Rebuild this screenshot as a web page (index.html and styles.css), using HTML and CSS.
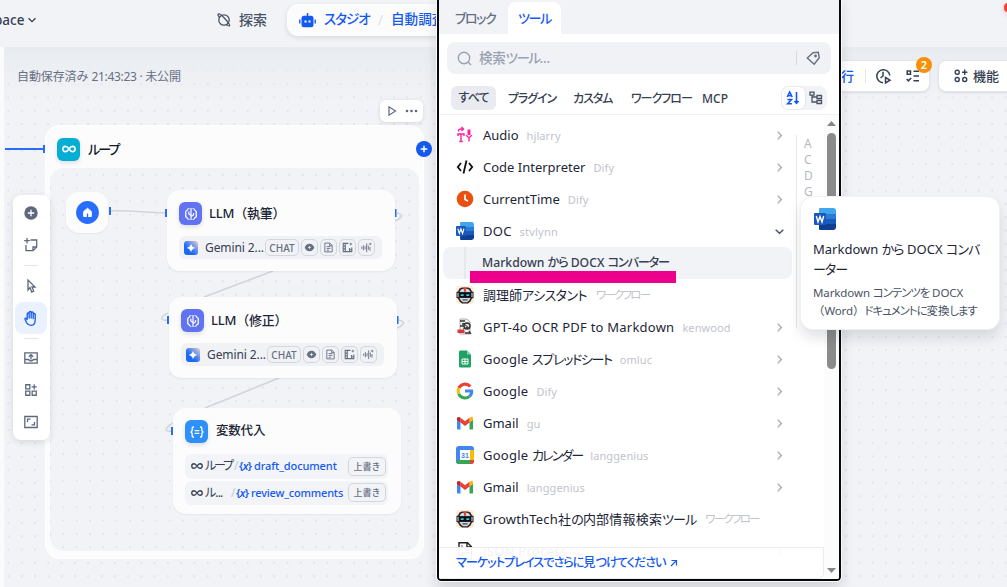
FILE: index.html
```html
<!DOCTYPE html>
<html lang="ja">
<head>
<meta charset="utf-8">
<title>ワークフロー</title>
<link rel="stylesheet" href="styles.css">
</head>
<body>
<svg class="defs" width="0" height="0">
  <defs>
    <linearGradient id="gem" x1="0" y1="1" x2="1" y2="0"><stop offset="0.35" stop-color="#1c69f5"/><stop offset="0.65" stop-color="#6d94ee"/><stop offset="1" stop-color="#f6cfc0"/></linearGradient>
    <symbol id="chev" viewBox="0 0 12 12"><path d="M4 1.800 8 6 4 10.200" fill="none" stroke="currentColor" stroke-width="1.500"/></symbol>
    <symbol id="down" viewBox="0 0 12 12"><path d="M1.800 4 6 8 10.200 4" fill="none" stroke="currentColor" stroke-width="1.600"/></symbol>
    <symbol id="inf" viewBox="0 0 24 24"><path d="M12 12c-2-3-3.500-4.500-6-4.500a4.500 4.500 0 0 0 0 9c2.500 0 4-1.500 6-4.500s3.500-4.500 6-4.500a4.500 4.500 0 0 1 0 9c-2.500 0-4-1.500-6-4.500z" fill="none" stroke="currentColor" stroke-width="2.600"/></symbol>
    <symbol id="llm" viewBox="0 0 14 14"><g fill="none" stroke="#fff" stroke-width="1.200"><path d="M7 1v12M5.500 1.500C3.800 1.500 3.400 2.400 3.200 3.200 1.800 3.700 1.300 5.300 1.900 7c-.6 1.700-.1 3.300 1.300 3.800.2.800.6 1.700 2.300 1.700M8.500 1.500c1.700 0 2.100.9 2.300 1.700 1.400.5 1.900 2.100 1.300 3.800.6 1.700.1 3.300-1.300 3.800-.2.800-.6 1.700-2.300 1.700M7 8.500 4.800 7V4.500M7 9.500 9.500 8V6"/></g></symbol>
    <symbol id="gemini" viewBox="0 0 14 14"><rect width="14" height="14" rx="3" fill="url(#gem)"/><path d="M7 2.600Q7.700 6.300 11.400 7 7.700 7.700 7 11.400 6.300 7.700 2.600 7 6.300 6.300 7 2.600z" fill="#fff"/></symbol>
    <symbol id="eye" viewBox="0 0 12 12"><path d="M6 1.800C3.200 1.800 1.300 4 .8 6c.5 2 2.400 4.200 5.200 4.200s4.700-2.200 5.200-4.200c-.5-2-2.400-4.200-5.200-4.200zM6 3.800l.6 1.600 1.600.6-1.600.6L6 8.200l-.6-1.600L3.800 6l1.600-.6z" fill="currentColor" fill-rule="evenodd"/></symbol>
    <symbol id="file" viewBox="0 0 12 12"><path d="M2 1.200h5.500L10 3.700v7.100H2zM4 5h4M4 7h4M4 9h2.500M7.200 1.500V4H10" fill="none" stroke="currentColor" stroke-width="1"/></symbol>
    <symbol id="film" viewBox="0 0 12 12"><path d="M7 1.500H1.300v9h9.400V6M3.600 1.500v9M8.300 6.500v4M1.300 4.500h2.300M1.300 7.500h2.300M8.300 8.500h2.400" fill="none" stroke="currentColor" stroke-width="1.200"/><path d="M9.700.2l.5 1.500 1.500.5-1.500.5-.5 1.500-.5-1.500-1.500-.5 1.500-.5z" fill="currentColor"/></symbol>
    <symbol id="wave" viewBox="0 0 12 12"><path d="M.8 5v2.500M2.600 3.500v5.500M4.400 4.500v3.500M6.200 1.500v9.500M8 4v4.500M9.800 5.500v4" fill="none" stroke="currentColor"/><path d="M10 .3l.5 1.400 1.400.5-1.400.5-.5 1.400-.5-1.400-1.400-.5 1.400-.5z" fill="currentColor"/></symbol>
    <symbol id="robot" viewBox="0 0 18 18"><rect width="18" height="18" rx="4" fill="#ffead5"/><path d="M.5 6 2 5.500 3.500 2.500 6 1.500h6l2.500 1L16 5.500l1.500.5v6l-1.500.5-1.500 3L12 17.500H6L3.500 15.500l-1.500-3L.5 12z" fill="#26282d"/><path d="M3.500 6 5 3.500 7 2.800h4l2 .7L14.500 6zM3.500 12h11l-1.300 2.500L11 16.300H7L4.800 14.500zM1.500 7h1v4h-1zM15.500 7h1v4h-1z" fill="#d4d6da"/><path d="M3.200 6.700h11.600v4.600H3.200z" fill="#0c0e14"/><path d="M4.700 8.200h3v1.800h-3zM10.300 8.200h3v1.800h-3z" fill="#30c8ee"/><path d="M8 1.500h2v4.300H8z" fill="#e84332"/><path d="M6.500 13.300h5v1.200h-5z" fill="#444"/></symbol>
    <symbol id="gmail" viewBox="0 0 18 14"><path d="M1 3v9.500c0 .6.400 1 1 1h2.500V6z" fill="#4285f4"/><path d="M17 3v9.500c0 .6-.4 1-1 1h-2.500V6z" fill="#34a853"/><path d="M13.500 2v4.500L17 4V2.500C17 .8 15 0 13.500 2z" fill="#fbbc04"/><path d="M4.500 6.500V1.800L9 5.200l4.500-3.400v4.700L9 10z" fill="#ea4335"/><path d="M1 2.500V4l3.500 2.500V1.800C3 .3 1 1 1 2.500z" fill="#c5221f"/></symbol>
    <symbol id="word" viewBox="0 0 22 22"><path d="M6 0h13a3 3 0 0 1 3 3v3H5V1a1 1 0 0 1 1-1z" fill="#41a5ee"/><path d="M5 6h17v5H5z" fill="#2b7cd3"/><path d="M5 11h17v5H5z" fill="#185abd"/><path d="M5 16h17v3a3 3 0 0 1-3 3H6a1 1 0 0 1-1-1z" fill="#103f91"/><rect y="5" width="12" height="12" rx="1" fill="#1959bb"/><path d="M2.300 8 4 14l2-5.500L8 14l1.700-6" fill="none" stroke="#fff" stroke-width="1.400"/></symbol>
    <symbol id="doc" viewBox="0 0 18 18"><path d="M3 .7h8.500l4 4V17H3zM11 1v4h4" fill="#fff" stroke="#222" stroke-width="1.400"/><path d="M5.500 4h1M5.500 8h1.500M9 8h4M5.500 11h7" stroke="#333" stroke-width="1.500"/></symbol>
    <symbol id="feat" viewBox="0 0 24 24"><path d="M3 3h7v7H3zM3 14h7v7H3zM14 14h7v7h-7zM17.500 2v9M13 6.500h9" fill="none" stroke="currentColor" stroke-width="2.200"/></symbol>
  </defs>
</svg>

<header class="top">
  <div class="space">pace <svg class="i10"><use href="#down"/></svg></div>
  <div class="explore">
    <svg width="14" height="14" viewBox="0 0 14 14" fill="none" stroke="#495464" stroke-width="1.300"><circle cx="7" cy="7" r="5.200"/><path d="M2.500 4.500C1 2.500.6 1.300 1.200 1 2.500.5 5.500 3 8.200 6s5 6 4.400 6.800c-.6.600-2.400-.5-3.800-1.500"/></svg>
    <span>探索</span>
  </div>
  <div class="studio">
    <svg width="17" height="15" viewBox="0 0 17 15"><path d="M8.500 0v3" stroke="#155aef" stroke-width="1.500"/><rect x="2.500" y="2.700" width="12" height="11.500" rx="2.500" fill="#155aef"/><path d="M.8 6.500v4M16.200 6.500v4" stroke="#155aef" stroke-width="1.400"/><path d="M5.500 7.500h2v2h-2zM9.500 7.500h2v2h-2z" fill="#fff"/></svg>
    <span class="k studio-t">スタジオ</span><i>/</i><span class="studio-n">自動調査</span>
  </div>
  <div class="avatar"></div>
</header>

<main class="canvas">
  <div class="saved">自動保存済み <b>21:43:23 · </b>未公開</div>
  <div class="runbar"><span>行</span><i></i>
    <svg width="17" height="17" viewBox="0 0 17 17" fill="none" stroke="#354052" stroke-width="1.500"><path d="M14.800 7.500A6.500 6.500 0 1 0 8 14.700M8 3.800V8L5.500 10"/><path d="m10.500 9.500 4.500 2.700-4.500 2.800z"/></svg>
    <svg width="14" height="14" viewBox="0 0 14 14" fill="none" stroke="#354052" stroke-width="1.500"><path d="M1.200 2h3.300v3.300H1.200zM.7 10l1.600 1.800L5.200 9M7.500 2.200H13M7.500 7H13M7.500 11.800H13"/></svg>
    <em>2</em>
  </div>
  <div class="featbar"><svg width="14" height="14" viewBox="0 0 14 14" fill="none" stroke="#354052" stroke-width="1.400"><rect x="1.200" y="1.200" width="4" height="4" rx="1.800"/><rect x="1.200" y="8.500" width="4" height="4" rx="1.800"/><rect x="8.700" y="8.500" width="4" height="4" rx="1.800"/><path d="M10.700.5v5.400M8 3.200h5.400"/></svg><span>機能</span></div>

  <div class="loop"><div class="loop-head"><div class="ico cyan"><svg width="14" height="14"><use href="#inf"/></svg></div><span class="k">ループ</span></div><div class="loop-in"></div></div>
  <div class="node-tools"><svg width="11" height="12" viewBox="0 0 11 12"><path d="M2 1.800v8.400L8.500 6z" fill="none" stroke="#5d687c" stroke-width="1.200"/></svg><svg width="13" height="4" viewBox="0 0 13 4" fill="#5d687c"><circle cx="2" cy="2" r="1.300"/><circle cx="6.500" cy="2" r="1.300"/><circle cx="11" cy="2" r="1.300"/></svg></div>

  <svg class="edges" width="440" height="587" viewBox="0 0 440 587">
    <g fill="none" stroke="#d0d5dc" stroke-width="1.500"><path d="M110 211C130 210 145 213 166 213"/><path d="M396 213q7 1 5 4q-2 3-6 4M273 271 204 297M168 313q-7 3-6 6q2 2 6 1"/><path d="M398 320q7 1 5 4q-2 3-6 4M279 378 205 408M173 423q-7 4-7 7q2 2 6 1"/></g>
    <path d="M5 149h39" stroke="#296dff" stroke-width="2"/>
    <g fill="#296dff"><path d="M43 145h2v8h-2zM109 207h2v8h-2zM165 209h2v8h-2zM394.500 209h2v8h-2zM167 316h2v8h-2zM396.500 316h2v8h-2zM171 427h2v8h-2z"/></g>
  </svg>
  <div class="plus"><svg width="16" height="16" viewBox="0 0 16 16"><circle cx="8" cy="8" r="8" fill="#155aef"/><path d="M8 4.700v6.600M4.700 8h6.600" stroke="#fff" stroke-width="1.500"/></svg></div>

  <div class="node start"><svg width="23" height="23" viewBox="0 0 23 23"><circle cx="11.500" cy="11.500" r="11.400" fill="#296dff"/><path d="M7.700 10.500 11.500 7.300 15.300 10.500v5H7.700z" fill="#fff" stroke="#fff" stroke-linejoin="round"/><path d="M11.500 12.500V16" stroke="#296dff" stroke-width="1.300"/></svg></div>

  <section class="node llm one">
    <div class="head"><div class="ico indigo"><svg width="14" height="14"><use href="#llm"/></svg></div><h3>LLM<span>（執筆）</span></h3></div>
    <div class="model"><svg width="14" height="14"><use href="#gemini"/></svg><span>Gemini 2...</span><b class="chat">CHAT</b><b><svg><use href="#eye"/></svg></b><b><svg><use href="#file"/></svg></b><b><svg><use href="#film"/></svg></b><b><svg><use href="#wave"/></svg></b></div>
  </section>
  <section class="node llm two">
    <div class="head"><div class="ico indigo"><svg width="14" height="14"><use href="#llm"/></svg></div><h3>LLM<span>（修正）</span></h3></div>
    <div class="model"><svg width="14" height="14"><use href="#gemini"/></svg><span>Gemini 2...</span><b class="chat">CHAT</b><b><svg><use href="#eye"/></svg></b><b><svg><use href="#file"/></svg></b><b><svg><use href="#film"/></svg></b><b><svg><use href="#wave"/></svg></b></div>
  </section>
  <section class="node assign">
    <div class="head"><div class="ico blue"><svg width="14" height="14" viewBox="0 0 14 14" fill="none" stroke="#fff" stroke-width="1.300"><path d="M4 2H3.200Q2.200 2 2.200 3v2.500L1 7l1.200 1.500V11q0 1 1 1H4M10 2h.8q1 0 1 1v2.500L13 7l-1.200 1.500V11q0 1-1 1H10M4.700 5.600h4.600M4.700 8.400h4.600"/></svg></div><h3 class="cjk">変数代入</h3></div>
    <div class="var"><svg width="12" height="12"><use href="#inf"/></svg><span class="k">ループ</span><i>/</i><em>{<u>x</u>}</em><strong>draft_document</strong><b>上書き</b></div>
    <div class="var"><svg width="12" height="12"><use href="#inf"/></svg><span class="k short">ル...</span><i class="wide">/</i><em>{<u>x</u>}</em><strong class="rev">review_comments</strong><b>上書き</b></div>
  </section>

  <nav class="tools">
    <a><svg width="14" height="14" viewBox="0 0 14 14"><circle cx="7" cy="7" r="6.700" fill="#5d687c"/><path d="M7 3.800v6.400M3.800 7h6.400" stroke="#fff" stroke-width="1.500"/></svg></a>
    <a><svg width="14" height="14" viewBox="0 0 14 14"><path d="M6.500 2h6.200v7L9 12.700H2V7M9 12.500V9h3.500M3 0v5.500M.2 2.700h5.600"/></svg></a>
    <hr>
    <a><svg width="12" height="14" viewBox="0 0 12 14"><path d="M3 1v10l2-2.500L6.700 13l2-.9L7 8h3z"/></svg></a>
    <a class="on"><svg width="16" height="16" viewBox="0 0 16 16"><path d="M4.200 9.500V4a1 1 0 0 1 2 0v4V2.500a1 1 0 0 1 2 0V8 3a1 1 0 0 1 2 0v5.500-4a1 1 0 0 1 2 0V9.500c0 3.700-1.200 5.800-4 5.800-2.200 0-3.500-.8-4.500-2.500L2 9.300c-.4-.9.700-1.500 1.300-.8l1 1.500"/></svg></a>
    <hr>
    <a><svg width="14" height="14" viewBox="0 0 14 14"><path d="M.8 1.800h12.400v10.400H.8zM1 8.500h3.500q2.500 3 5 0H13M7 8.500V3.700M4.800 5.800 7 3.600l2.200 2.200"/></svg></a>
    <a><svg width="14" height="14"><use href="#feat"/></svg></a>
    <a><svg width="14" height="14" viewBox="0 0 14 14"><path d="M.8 1.500h12.400v11H.8zM3.500 7V4.200h3M10.500 7v2.800h-3"/></svg></a>
  </nav>
</main>

<aside class="panel">
  <div class="tabs"><span class="k">ブロック</span><span class="k act">ツール</span></div>
  <div class="search"><svg width="15" height="15" viewBox="0 0 15 15" fill="none" stroke="#98a2b2" stroke-width="1.400"><circle cx="7" cy="7" r="5.700"/><path d="m11 11 3 3"/></svg><span>検索<span class="k">ツール</span>...</span><i></i><svg width="15" height="15" viewBox="0 0 15 15" fill="none" stroke="#676f83" stroke-width="1.400"><path d="M7 1.700 12.300 1.300l.9 5.500-5 6.500L1.300 7z"/><circle cx="9.500" cy="5" r=".7"/></svg></div>
  <div class="filters"><span class="k sel">すべて</span><span class="k f2">プラグイン</span><span class="k f3">カスタム</span><span class="k f4">ワークフロー</span><span class="mcp">MCP</span>
    <div class="sort"><div><svg width="14" height="14" viewBox="0 0 14 14" fill="none" stroke="#155aef" stroke-width="1.600"><path d="M1.200 6 3.700 1l2.500 5M2.200 4.700h3M1.500 8.500h4L1.700 12.700h4.200M10.500 1v11M8.500 10l2 2.300 2-2.300"/></svg></div><svg width="14" height="14" viewBox="0 0 14 14" fill="none" stroke="#495464" stroke-width="1.300"><path d="M1 1.200h4v3H1zM3 4.500V11h5M3 6h5M8 4.500h4.500v3H8zM8 9.500h4.500v3H8z"/></svg></div>
  </div>
  <div class="body">
    <div class="list">
      <div class="row"><svg class="ic" viewBox="0 0 18 18" fill="none" stroke="#ff1fa0" stroke-width="1.400"><path d="M2.500 5.500Q2.500 3 5 3h2M5.500 1 7.500 3 5.500 5M2 10V8h6v2M5 8v7.500M3.300 15.500h3.400"/><path d="M13 3.500v5.500" stroke-width="3"/><path d="M10.300 9q2.700 5 5.400 0M13 12v3.500"/></svg><p>Audio</p><small>hjlarry</small><svg class="c"><use href="#chev"/></svg></div>
      <div class="row"><svg class="ic" viewBox="0 0 18 18" fill="none" stroke="#111" stroke-width="1.800"><path d="M5 5 1.800 9 5 13M13 5l3.200 4-3.200 4M10.500 2.500l-3 13"/></svg><p class="code">Code Interpreter</p><small>Dify</small><svg class="c"><use href="#chev"/></svg></div>
      <div class="row"><svg class="ic" viewBox="0 0 18 18"><circle cx="9" cy="9" r="8.300" fill="#e9500f"/><path d="M9 4.500V9.500l3 1.500" fill="none" stroke="#fff" stroke-width="1.700"/></svg><p>CurrentTime</p><small>Dify</small><svg class="c"><use href="#chev"/></svg></div>
      <div class="row"><svg class="ic"><use href="#word"/></svg><p class="wd">DOC</p><small class="st">stvlynn</small><svg class="c dk"><use href="#down"/></svg></div>
      <div class="row sub"><p>Markdown <span class="k">から</span> DOCX <span class="k">コンバーター</span></p><div class="mark"></div></div>
      <div class="row"><svg class="ic"><use href="#robot"/></svg><p>調理師<span class="k asst">アシスタント</span></p><small class="k">ワークフロー</small></div>
      <div class="row"><svg class="ic" viewBox="0 0 18 18"><path d="M4 1h7l3 3v12H4z" fill="#f3f3f3" stroke="#999" stroke-width=".8"/><path d="M4 3h5M6 6h3M13 13l2 3M4 8h4M9 15h5" stroke="#333" stroke-width="1.300"/><circle cx="11" cy="8" r="3" fill="#ddd" stroke="#333" stroke-width="1.400"/><path d="M7 5l7 6M7 11l5-2" stroke="#333"/><path d="M1.500 11.500h7v3.500h-7z" fill="#dd3437"/></svg><p class="gpt">GPT-4o OCR PDF to Markdown</p><small>kenwood</small><svg class="c"><use href="#chev"/></svg></div>
      <div class="row"><svg class="ic" viewBox="0 0 18 18"><path d="M4 .5h7l4 4V16q0 1.500-1.500 1.500h-9Q3 17.500 3 16V2Q3 .5 4 .5z" fill="#1fa363"/><path d="M11 .5v4h4z" fill="#8ed1b1"/><path d="M6 9h6v5H6zM6 11.500h6M9 9v5" fill="none" stroke="#fff"/></svg><p class="wd">Google <span class="k sheet">スプレッドシート</span></p><small>omluc</small><svg class="c"><use href="#chev"/></svg></div>
      <div class="row"><svg class="ic" viewBox="0 0 18 18" fill="none" stroke-width="3"><path d="M14.300 4.500A7 7 0 0 0 2.800 6" stroke="#ea4335"/><path d="M2.800 6a7 7 0 0 0 0 6" stroke="#fbbc05"/><path d="M2.800 12a7 7 0 0 0 10.700 2.300" stroke="#34a853"/><path d="M13.500 14.300A6 6 0 0 0 15.700 9H9" stroke="#4285f4"/></svg><p class="wd">Google</p><small>Dify</small><svg class="c"><use href="#chev"/></svg></div>
      <div class="row"><svg class="ic"><use href="#gmail"/></svg><p>Gmail</p><small>gu</small><svg class="c"><use href="#chev"/></svg></div>
      <div class="row"><svg class="ic" viewBox="0 0 18 18"><rect width="18" height="18" rx="3" fill="#4285f4"/><path d="M14 4h4v10h-4z" fill="#fbbc04"/><path d="M4 14h10v4H3a3 3 0 0 1-3-3z" fill="#34a853"/><path d="M14 14h4v1a3 3 0 0 1-3 3h-1z" fill="#ea4335"/><path d="M4 4h10v10H4z" fill="#fff"/><text x="5" y="11.700" class="cal">31</text></svg><p class="wd">Google <span class="k calen">カレンダー</span></p><small>langgenius</small><svg class="c"><use href="#chev"/></svg></div>
      <div class="row"><svg class="ic"><use href="#gmail"/></svg><p>Gmail</p><small>langgenius</small><svg class="c"><use href="#chev"/></svg></div>
      <div class="row"><svg class="ic"><use href="#robot"/></svg><p class="gt">GrowthTech社<span class="k">の</span>内部情報検索<span class="k">ツール</span></p><small class="k">ワークフロー</small></div>
      <div class="row"><svg class="ic"><use href="#doc"/></svg><p class="wd">JSON Process</p><small>Mingwei Zhang</small><svg class="c"><use href="#chev"/></svg></div>
    </div>
    <div class="index"><span>A</span><span>C</span><span>D</span><span>G</span></div>
    <div class="scroll"><svg width="9" height="5"><path d="M0 5 4.500 0 9 5z" fill="#858585"/></svg><div></div><svg width="9" height="5"><path d="M0 0h9L4.500 5z" fill="#858585"/></svg></div>
    <div class="market"><span><span class="k">マーケットプレイスでさらに</span>見<span class="k">つけてください</span></span><svg width="8" height="8" viewBox="0 0 8 8"><path d="M1.500 1.500h5v5M6.500 1.500l-5.500 5.500" fill="none" stroke="#155aef" stroke-width="1.200"/></svg></div>
  </div>
</aside>

<div class="tip"><svg width="22" height="22"><use href="#word"/></svg><h4>Markdown <span class="k">から</span> DOCX <span class="k">コンバ<br>ーター</span></h4><p>Markdown <span class="k">コンテンツを</span> DOCX<br><span class="paren">（Word）</span><span class="k">ドキュメントに</span>変換<span class="k">します</span></p></div>
</body>
</html>
```

FILE: styles.css
```css
* { box-sizing: border-box; }
body { margin: 0; width: 1007px; height: 587px; overflow: hidden; position: relative; background: #f2f4f7; color: #1d2636; font: 13px/20px "Noto Sans", "Noto Sans CJK JP", sans-serif; white-space: nowrap; }
svg { display: block; flex: none; overflow: visible; }
.defs { position: absolute; }
i, em, u { font-style: normal; text-decoration: none; }
h3, h4, p { margin: 0; font-weight: 400; }
.k { font-feature-settings: "palt"; letter-spacing: -0.9px; }

.top { height: 47px; display: flex; align-items: center; background: #f2f3f7; padding-bottom: 7px; position: relative; }
.space { width: 213px; display: flex; align-items: center; gap: 3px; margin-left: -7px; padding-left: 1px; font-size: 13.5px; color: #354052; font-weight: 500; }
.i10 { width: 10px; height: 10px; }
.explore { display: flex; align-items: center; gap: 8px; margin-left: 11px; width: 70px; font-size: 14px; line-height: 18px; color: #495464; font-weight: 500; }
.explore span { padding-bottom: 1px; }
.studio { display: flex; align-items: center; height: 32px; width: 190px; padding-left: 12px; border-radius: 11px; background: #fcfcfd; box-shadow: 0 2px 5px #1018281c; font-size: 13.6px; font-weight: 500; color: #155aef; }
.studio span { position: relative; top: -1px; }
.studio-t { margin-left: 8px; width: 54px; letter-spacing: -1.1px; }
.studio i { color: #dcdfe4; font-weight: 400; width: 13px; }
.avatar { position: absolute; left: 1004px; top: 3px; width: 9px; height: 9px; border-radius: 4px; background: #f04438; box-shadow: 0 2px 5px #f0443840; }

.canvas { position: absolute; left: 0; top: 47px; width: 1007px; height: 540px; border-left: 4px solid #fbfbfc; background: linear-gradient(#e8ecf0, #f2f4f700 56px), radial-gradient(circle, #e2e4e9 1px, #e2e4e900 1.4px) -2.300px 3.900px / 13.3px 13.3px, #f2f3f7; }
.canvas > * { position: absolute; }
.saved { left: 13px; top: 20px; font-size: 12px; color: #676f83; letter-spacing: -.1px; }
.saved b { font-weight: 400; letter-spacing: -.3px; }

.runbar, .featbar { top: 13px; height: 32px; display: flex; align-items: center; background: #fff; border: 1px solid #e2e5ea; border-radius: 8px; box-shadow: 0 1px 2px #10182818; color: #354052; font-weight: 500; }
.runbar { left: 780px; width: 146px; padding-left: 56px; color: #155aef; }
.runbar i { width: 1px; height: 14px; background: #e2e5ea; margin: 0 9px 0 11px; }
.runbar svg + svg { margin-left: 14px; }
.runbar em { position: absolute; right: -3px; top: -4px; width: 16px; height: 16px; border-radius: 50%; background: #f79009; color: #fff; font: 600 11px/16px "Noto Sans", sans-serif; text-align: center; }
.featbar { left: 934px; width: 90px; padding-left: 15px; gap: 5px; }

.loop { left: 41px; top: 78px; width: 379px; height: 434px; padding: 0 4px 7px; border-radius: 14px; border: 1px solid #fff; background: #fcfcfdf0; display: flex; flex-direction: column; }
.loop-head { height: 42px; padding: 4px 0 0 7px; display: flex; align-items: center; gap: 8px; font-weight: 500; color: #101828; }
.loop-head .k { letter-spacing: -1.8px; }
.loop-in { flex: 1; border-radius: 14px; background: radial-gradient(circle, #e2e4e9 1px, #e2e4e900 1.4px) 6.700px .3px / 13.3px 13.3px, #f2f3f7; }
.ico { width: 23px; height: 23px; border-radius: 6px; display: flex; align-items: center; justify-content: center; box-shadow: 0 2px 4px #10182820; }
.cyan { background: #06aed4; color: #fff; }
.indigo { background: #6172f3; }
.blue { background: #2e90fa; }
.node-tools { left: 376px; top: 53px; width: 43px; height: 22px; border-radius: 6px; background: #fff; box-shadow: 0 1px 4px #10182820; display: flex; align-items: center; gap: 7px; padding-left: 7px; }
.edges { left: -4px; top: -47px; }
.plus { left: 412px; top: 94px; }

.node { background: #fcfcfd; border-radius: 13px; box-shadow: 0 1px 2px #10182810; padding: 12px; }
.start { left: 62px; top: 145px; width: 42px; height: 41px; padding: 9px 9px 9px 10px; }
.llm { width: 228px; height: 81px; }
.one { left: 163px; top: 143px; }
.two { left: 165px; top: 250px; }
.assign { left: 169px; top: 361px; width: 228px; height: 106px; }
.head { height: 23px; display: flex; align-items: center; gap: 7px; }
.head h3 { font-size: 13px; font-weight: 500; color: #1d2636; letter-spacing: -.2px; position: relative; top: -1px; }
.head .cjk { font-size: 12.5px; padding-left: 1px; }
.model { margin-top: 11px; width: 203px; height: 23px; border-radius: 6px; background: #f1f2f5; padding-left: 5px; display: flex; align-items: center; color: #354052; font-size: 12px; }
.model span { margin-left: 7px; width: 60px; letter-spacing: -.1px; }
.model b { width: 17px; height: 17px; border: 1px solid #d3d7dd; border-radius: 5px; display: flex; align-items: center; justify-content: center; margin-right: 2px; color: #676f83; }
.model b svg { width: 11px; height: 11px; }
.model .chat { width: 34px; font-size: 10px; font-weight: 500; }
.var { display: flex; align-items: center; width: 203px; height: 24.500px; border-radius: 6px; background: #f2f4f7; margin-top: 2px; padding: 0 2px 0 6px; font-size: 12px; color: #354052; }
.head + .var { margin-top: 11px; }
.var .k { margin-left: 2px; width: 29px; letter-spacing: -2.2px; }
.var .short { width: 26px; letter-spacing: -.9px; }
.var i { width: 5px; color: #c5cad2; }
.var .wide { width: 5px; }
.var em { color: #155aef; font-size: 11px; font-weight: 600; width: 15px; letter-spacing: -.6px; }
.var u { font-style: italic; }
.var strong { flex: 1; color: #155aef; font-size: 11px; font-weight: 500; letter-spacing: -.1px; }
.var .rev { letter-spacing: -.18px; }
.var b { flex: none; width: 38px; height: 19px; border: 1px solid #d3d7dd; border-radius: 5px; color: #676f83; font-size: 9px; line-height: 17px; font-weight: 500; text-align: center; }

.tools { left: 9px; top: 148px; width: 37px; height: 245px; border-radius: 8px; background: #fff; box-shadow: 0 2px 7px #10182820; display: flex; flex-direction: column; align-items: center; padding: 2px 1px 0 0; }
.tools a { width: 32px; height: 32px; border-radius: 8px; display: flex; align-items: center; justify-content: center; color: #5d687c; }
.tools a path { fill: none; stroke: #5d687c; stroke-width: 1.3; }
.tools a:first-child path { stroke: #fff; }
.tools .on { background: #eaf1ff; }
.tools .on path { stroke: #155aef; stroke-linejoin: round; }
.tools hr { width: 14px; height: 1px; border: 0; background: #e3e5ea; margin: 4px 0 4px; }
.tools hr + a + a + hr { margin-bottom: 3px; }

.panel { position: absolute; left: 437px; top: -6px; width: 404px; height: 587px; border: 2px solid #06080c; outline: 1px solid #fbfbfc; border-radius: 4px; background: #fff; display: flex; flex-direction: column; box-shadow: 0 8px 14px #10182824; overflow: hidden; }
.tabs { height: 38px; padding: 6px 0 0 16px; display: flex; background: #f2f3f7; color: #676f83; font-weight: 500; }
.tabs span { line-height: 32px; width: 53px; height: 32px; letter-spacing: -1.4px; }
.tabs .act { background: #fff; border-radius: 8px 8px 0 0; color: #155aef; text-align: center; }
.search { margin: 8px 8px 0; height: 32px; border-radius: 8px; background: #f1f2f6; display: flex; align-items: center; padding: 0 10px; color: #98a2b2; font-size: 13.5px; font-weight: 500; }
.search > span { margin-left: 7px; flex: 1; letter-spacing: -.2px; }
.search .k { letter-spacing: -1.5px; }
.search i { width: 1px; height: 14px; background: #d5d9e0; margin-right: 9px; }
.filters { height: 41px; padding: 12px 12px 4px; border-bottom: 1px solid #eff0f3; display: flex; align-items: center; color: #354052; font-size: 12px; font-weight: 500; }
.filters > span { line-height: 22px; padding-top: 1px; }
.filters .sel { background: #e9ebf0; width: 45px; height: 24px; text-align: center; border-radius: 6px; }
.f2 { margin-left: 12px; width: 65px; }
.f3 { width: 58px; }
.f4 { width: 71px; letter-spacing: -1px; }
.filters .f2, .filters .f3 { letter-spacing: -1.1px; }
.mcp { flex: 1; }
.sort { width: 46px; height: 24px; border-radius: 8px; background: #f2f3f7; display: flex; align-items: center; gap: 4px; padding-left: 1px; }
.sort div { width: 23px; height: 22px; border-radius: 6px; background: #fff; box-shadow: 0 0 1px 1px #1018280c; padding: 4px; }
.body { flex: 1; min-height: 0; display: flex; position: relative; overflow: hidden; }
.list { width: 353px; padding: 4px 0 0 4px; }
.row { height: 32px; padding: 0 7px 0 13px; display: flex; align-items: center; }
.ic { width: 18px; height: 18px; margin-right: 9px; }
.row p { font-size: 13px; color: #1d2636; }
.row .wd { letter-spacing: .25px; }
.row .gpt { letter-spacing: .23px; }
.row .gt { letter-spacing: .2px; }
.row p .k { letter-spacing: -1.2px; }
.row .asst { letter-spacing: -.55px !important; }
.row .sheet { letter-spacing: -1.35px !important; }
.row .calen { letter-spacing: -1.9px !important; }
.row .gt .k { letter-spacing: -.9px; }
.row small { font-size: 11px; color: #c0c4cc; margin-left: 8px; padding-top: 1px; letter-spacing: .1px; }
.row small.k { letter-spacing: -1.8px; font-size: 11.5px; padding-top: 0; margin-left: 9px; }
.row .st { letter-spacing: .2px; }
.row .c { width: 11px; height: 11px; margin-left: auto; color: #a3abb8; }
.row .dk { color: #495464; }
.cal { font: 700 7px "Liberation Sans", sans-serif; fill: #4285f4; }
.sub { background: #f2f3f7; border-radius: 8px; position: relative; padding-left: 39px; }
.sub::before { content: ""; position: absolute; left: 21px; top: 0; width: 2px; height: 32px; background: #e6e8ed; }
.row.sub p { font-size: 12.2px; font-weight: 500; color: #354052; }
.sub p .k { letter-spacing: -1.2px; }
.mark { position: absolute; left: 27px; top: 24px; width: 206px; height: 12px; background: #ec008c; }
.index { margin: 20px 0 0 4px; height: 193px; width: 28px; border-left: 1px solid #e6e8ec; padding: 1px 0 0 7px; display: flex; flex-direction: column; font-size: 12px; line-height: 16px; color: #b4bac4; }
.scroll { width: 15px; background: #fcfcfc; padding: 6px 0 6px; display: flex; flex-direction: column; align-items: center; }
.scroll div { width: 9px; height: 236px; margin: 7px 0 auto; border-radius: 5px; background: #8b8b8b; }
.market { position: absolute; left: 0; bottom: 0; width: 385px; height: 32px; background: #fffffff0; border: 1px solid #eaecef; border-width: 1px 1px 1px 0; border-radius: 0 0 6px 0; padding-left: 17px; display: flex; align-items: center; gap: 5px; color: #155aef; font-weight: 500; font-size: 12.2px; }
.market .k { letter-spacing: -1.05px; }

.tip { position: absolute; left: 801px; top: 197px; width: 198px; height: 132px; border-radius: 12px; background: #fff; box-shadow: 0 0 0 1px #f0f1f3, 0 8px 14px #10182822; padding: 11px 12px; }
.tip svg { margin-left: 1px; }
.tip h4 { margin-top: 9px; font-size: 13px; line-height: 20px; color: #1d2636; }
.tip p { margin-top: 5px; font-size: 11.500px; line-height: 18px; color: #495464; letter-spacing: -.1px; }
.tip p .k { letter-spacing: -1.1px; }
```
